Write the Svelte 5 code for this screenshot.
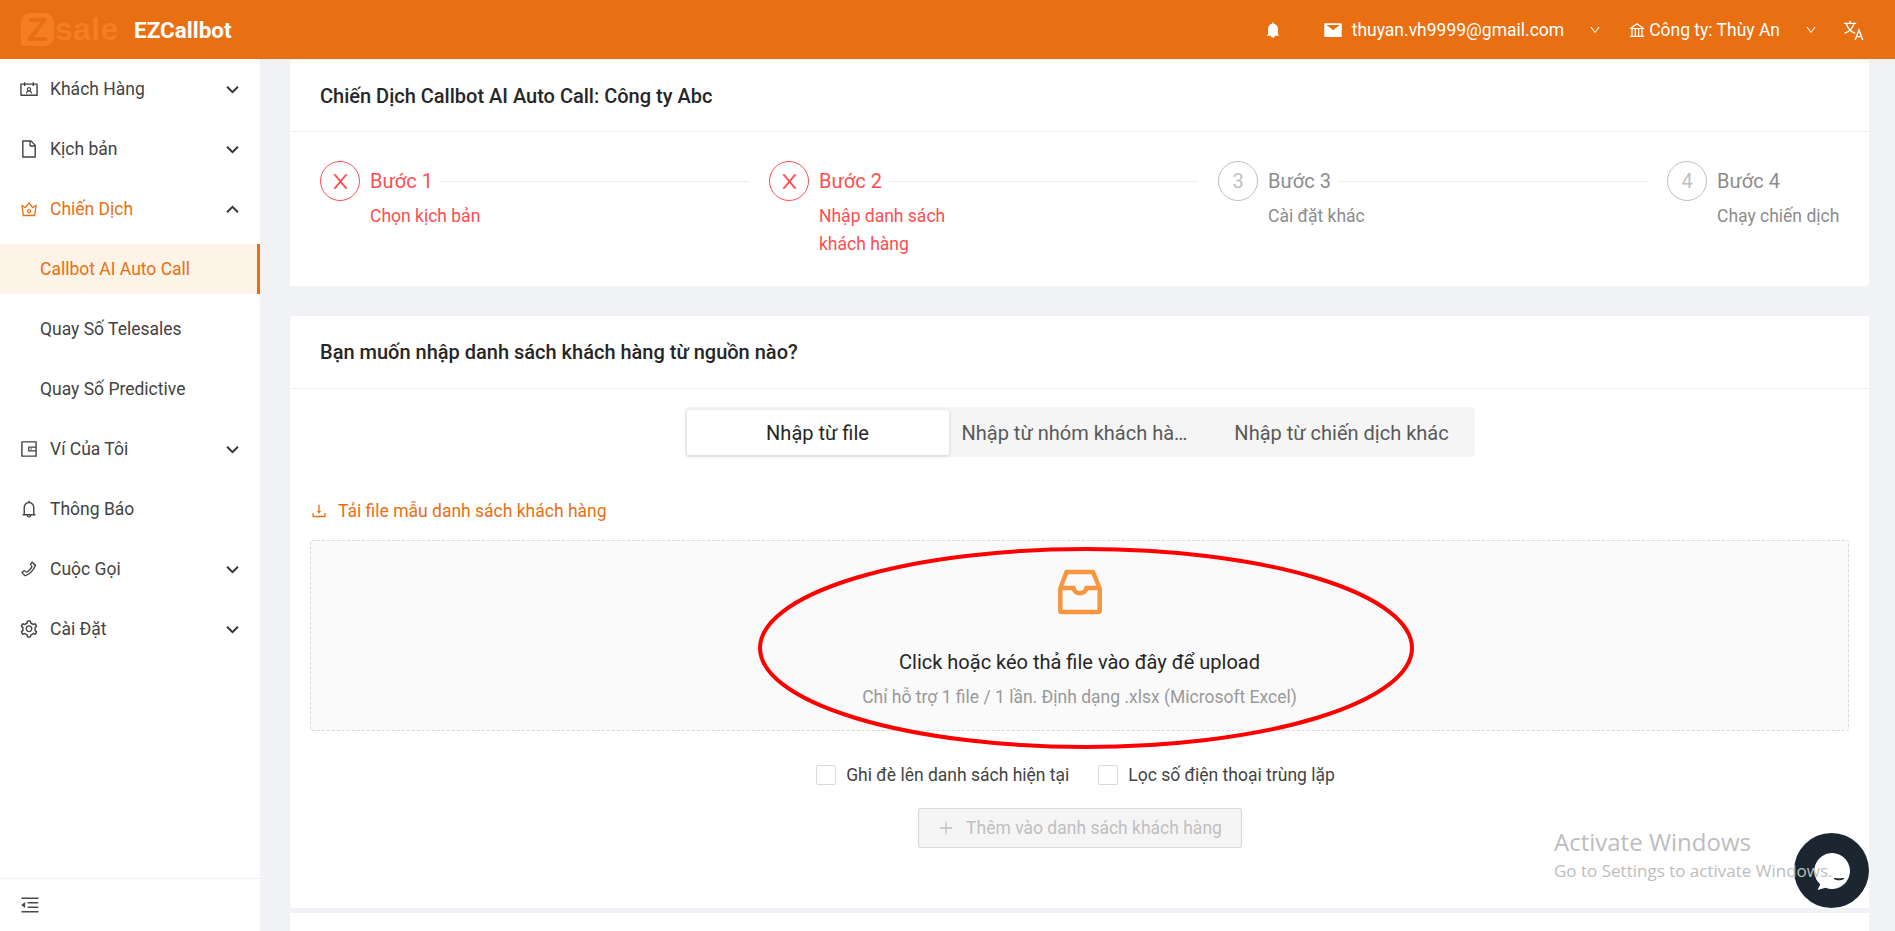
<script>
  const icons = {
    contacts: 'M594.3 601.5a111.8 111.8 0 0029.1-75.5c0-61.9-49.9-112-111.4-112s-111.4 50.1-111.4 112c0 29.1 11 55.5 29.1 75.5a158.09 158.09 0 00-74.6 126.1 8 8 0 008 8.4H407c4.2 0 7.6-3.3 7.9-7.5 3.8-50.6 46-90.5 97.2-90.5s93.4 40 97.2 90.5c.3 4.2 3.7 7.5 7.9 7.5H661a8 8 0 008-8.4c-2.8-53.3-32-99.7-74.7-126.1zM512 578c-28.5 0-51.7-23.3-51.7-52s23.2-52 51.7-52 51.7 23.3 51.7 52-23.2 52-51.7 52zm416-354H768v-56c0-4.4-3.6-8-8-8h-56c-4.4 0-8 3.6-8 8v56H328v-56c0-4.4-3.6-8-8-8h-56c-4.4 0-8 3.6-8 8v56H96c-17.7 0-32 14.3-32 32v576c0 17.7 14.3 32 32 32h832c17.7 0 32-14.3 32-32V256c0-17.7-14.3-32-32-32zm-40 568H136V296h120v56c0 4.4 3.6 8 8 8h56c4.4 0 8-3.6 8-8v-56h368v56c0 4.4 3.6 8 8 8h56c4.4 0 8-3.6 8-8v-56h120v496z',
    file: 'M854.6 288.6L639.4 73.4c-6-6-14.1-9.4-22.6-9.4H192c-17.7 0-32 14.3-32 32v832c0 17.7 14.3 32 32 32h640c17.7 0 32-14.3 32-32V311.3c0-8.5-3.4-16.7-9.4-22.7zM790.2 326H602V137.8L790.2 326zm1.8 562H232V136h302v216a42 42 0 0042 42h216v494z',
    crown: 'M899.6 276.5L705 396.4 518.4 147.5a8.06 8.06 0 00-12.9 0L319 396.4 124.3 276.5c-5.7-3.5-13.1 1.2-12.2 7.9L188.5 865c1.1 7.9 7.9 14 16 14h615.1c8 0 14.9-6 15.9-14l76.4-580.6c.8-6.7-6.5-11.4-12.3-7.9zm-126 534.1H250.3l-53.8-409.4 139.8 86.1L512 252.9l175.7 234.4 139.8-86.1-53.9 409.4zM512 509c-62.1 0-112.6 50.5-112.6 112.6S449.9 734.2 512 734.2s112.6-50.5 112.6-112.6S574.1 509 512 509zm0 160.9c-26.6 0-48.2-21.6-48.2-48.3 0-26.6 21.6-48.3 48.2-48.3s48.2 21.6 48.2 48.3c0 26.6-21.6 48.3-48.2 48.3z',
    wallet: 'M880 112H144c-17.7 0-32 14.3-32 32v736c0 17.7 14.3 32 32 32h736c17.7 0 32-14.3 32-32V144c0-17.7-14.3-32-32-32zm-40 464H528V448h312v128zm0 264H184V184h656v200H496c-17.7 0-32 14.3-32 32v192c0 17.7 14.3 32 32 32h344v200zM580 512a40 40 0 1080 0 40 40 0 10-80 0z',
    bell: 'M816 768h-24V428c0-141.1-104.3-257.7-240-277.1V112c0-22.1-17.9-40-40-40s-40 17.9-40 40v38.9c-135.7 19.4-240 136-240 277.1v340h-24c-17.7 0-32 14.3-32 32v32c0 4.4 3.6 8 8 8h216c0 61.8 50.2 112 112 112s112-50.2 112-112h216c4.4 0 8-3.6 8-8v-32c0-17.7-14.3-32-32-32zM512 888c-26.5 0-48-21.5-48-48h96c0 26.5-21.5 48-48 48zM304 768V428c0-55.6 21.6-107.8 60.9-147.1S456.4 220 512 220c55.6 0 107.8 21.6 147.1 60.9S720 372.4 720 428v340H304z',
    bellFilled: 'M816 768h-24V428c0-141.1-104.3-257.8-240-277.2V112c0-22.1-17.9-40-40-40s-40 17.9-40 40v38.8c-135.7 19.4-240 136.1-240 277.2v340h-24c-17.7 0-32 14.3-32 32v32c0 4.4 3.6 8 8 8h216c0 61.8 50.2 112 112 112s112-50.2 112-112h216c4.4 0 8-3.6 8-8v-32c0-17.7-14.3-32-32-32z',
    setting: 'M924.8 625.7l-65.5-56c3.1-19 4.7-38.4 4.7-57.8s-1.6-38.8-4.7-57.8l65.5-56a32.03 32.03 0 009.3-35.2l-.9-2.6a443.74 443.74 0 00-79.7-137.9l-1.8-2.1a32.12 32.12 0 00-35.1-9.5l-81.3 28.9c-30-24.6-63.5-44-99.7-57.6l-15.7-85a32.05 32.05 0 00-25.8-25.7l-2.7-.5c-52.1-9.4-106.9-9.4-159 0l-2.7.5a32.05 32.05 0 00-25.8 25.7l-15.8 85.4a351.86 351.86 0 00-99 57.4l-81.9-29.1a32 32 0 00-35.1 9.5l-1.8 2.1a446.02 446.02 0 00-79.7 137.9l-.9 2.6c-4.5 12.5-.8 26.5 9.3 35.2l66.3 56.6c-3.1 18.8-4.6 38-4.6 57.1 0 19.2 1.5 38.4 4.6 57.1L99 625.5a32.03 32.03 0 00-9.3 35.2l.9 2.6c18.1 50.4 44.9 96.9 79.7 137.9l1.8 2.1a32.12 32.12 0 0035.1 9.5l81.9-29.1c29.8 24.5 63.1 43.9 99 57.4l15.8 85.4a32.05 32.05 0 0025.8 25.7l2.7.5a449.4 449.4 0 00159 0l2.7-.5a32.05 32.05 0 0025.8-25.7l15.7-85a350 350 0 0099.7-57.6l81.3 28.9a32 32 0 0035.1-9.5l1.8-2.1c34.8-41.1 61.6-87.5 79.7-137.9l.9-2.6c4.5-12.3.8-26.3-9.3-35zM788.3 465.9c2.5 15.1 3.8 30.6 3.8 46.1s-1.3 31-3.8 46.1l-6.6 40.1 74.7 63.9a370.03 370.03 0 01-42.6 73.6L721 702.8l-31.4 25.8c-23.9 19.6-50.5 35-79.3 45.8l-38.1 14.3-17.9 97a377.5 377.5 0 01-85 0l-17.9-97.2-37.8-14.5c-28.5-10.8-55-26.2-78.7-45.7l-31.4-25.9-93.4 33.2c-17-22.9-31.2-47.6-42.6-73.6l75.5-64.5-6.5-40c-2.4-14.9-3.7-30.3-3.7-45.5 0-15.3 1.2-30.6 3.7-45.5l6.5-40-75.5-64.5c11.3-26.1 25.6-50.7 42.6-73.6l93.4 33.2 31.4-25.9c23.7-19.5 50.2-34.9 78.7-45.7l37.9-14.3 17.9-97.2c28.1-3.2 56.8-3.2 85 0l17.9 97 38.1 14.3c28.7 10.8 55.4 26.2 79.3 45.8l31.4 25.8 92.8-32.9c17 22.9 31.2 47.6 42.6 73.6L781.8 426l6.5 39.9zM512 326c-97.2 0-176 78.8-176 176s78.8 176 176 176 176-78.8 176-176-78.8-176-176-176zm79.2 255.2A111.6 111.6 0 01512 614c-29.9 0-58-11.7-79.2-32.8A111.6 111.6 0 01400 502c0-29.9 11.7-58 32.8-79.2C454 401.6 482.1 390 512 390c29.9 0 58 11.6 79.2 32.8A111.6 111.6 0 01624 502c0 29.9-11.7 58-32.8 79.2z',
    phone: 'M690 130l170 150c20 18 24 44 8 72C760 600 590 770 340 880c-28 12-52 6-70-12L130 720c-22-22-20-52 4-70l110-80c20-14 44-12 62 4l70 62c110-60 190-140 250-250l-56-78c-14-20-14-44 2-62l70-100c12-16 32-28 48-16zM690 200l-66 94 78 108c-70 140-170 240-310 310l-96-84-100 72 124 132c220-100 370-250 470-470z',
    fold: 'M408 442h480c4.4 0 8-3.6 8-8v-56c0-4.4-3.6-8-8-8H408c-4.4 0-8 3.6-8 8v56c0 4.4 3.6 8 8 8zm-8 204c0 4.4 3.6 8 8 8h480c4.4 0 8-3.6 8-8v-56c0-4.4-3.6-8-8-8H408c-4.4 0-8 3.6-8 8v56zm504-486H120c-4.4 0-8 3.6-8 8v56c0 4.4 3.6 8 8 8h784c4.4 0 8-3.6 8-8v-56c0-4.4-3.6-8-8-8zm0 632H120c-4.4 0-8 3.6-8 8v56c0 4.4 3.6 8 8 8h784c4.4 0 8-3.6 8-8v-56c0-4.4-3.6-8-8-8zM115.4 518.9L271.7 642c5.8 4.6 14.4.5 14.4-6.9V388.9c0-7.4-8.5-11.5-14.4-6.9L115.4 505.1a8.74 8.74 0 000 13.8z',
    mail: 'M928 160H96c-17.7 0-32 14.3-32 32v640c0 17.7 14.3 32 32 32h832c17.7 0 32-14.3 32-32V192c0-17.7-14.3-32-32-32zm-80.8 108.9L531.7 514.4c-7.8 6.1-18.7 6.1-26.5 0L189.6 268.9A7.2 7.2 0 01194 256h648.8a7.2 7.2 0 014.4 12.9z',
    bank: 'M894 462c30.9 0 43.8-39.7 18.7-58L530.8 126.2a31.81 31.81 0 00-37.6 0L111.3 404c-25.1 18.2-12.2 58 18.8 58H192v374h-72c-4.4 0-8 3.6-8 8v52c0 4.4 3.6 8 8 8h784c4.4 0 8-3.6 8-8v-52c0-4.4-3.6-8-8-8h-72V462h62zM512 196.7l271.1 197.2H240.9L512 196.7zM264 462h117v374H264V462zm189 0h117v374H453V462zm307 374H642V462h118v374z',
    down: 'M884 256h-75c-5.1 0-9.9 2.5-12.9 6.6L512 654.2 227.9 262.6c-3-4.1-7.8-6.6-12.9-6.6h-75c-6.5 0-10.3 7.4-6.5 12.7l352.6 486.1c12.8 17.6 39 17.6 51.7 0l352.6-486.1c3.9-5.3.1-12.7-6.4-12.7z',
    close: 'M563.8 512l262.5-312.9c4.4-5.2.7-13.1-6.1-13.1h-79.8c-4.7 0-9.2 2.1-12.3 5.7L511.6 449.8 295.1 191.7c-3-3.6-7.5-5.7-12.3-5.7H203c-6.8 0-10.5 7.9-6.1 13.1L459.4 512 196.9 824.9A7.95 7.95 0 00203 838h79.8c4.7 0 9.2-2.1 12.3-5.7l216.5-258.1 216.5 258.1c3 3.6 7.5 5.7 12.3 5.7h79.8c6.8 0 10.5-7.9 6.1-13.1L563.8 512z',
    download: 'M505.7 661a8 8 0 0012.6 0l112-141.7c4.1-5.2.4-12.9-6.3-12.9h-74.1V168c0-4.4-3.6-8-8-8h-60c-4.4 0-8 3.6-8 8v338.3H400c-6.7 0-10.4 7.7-6.3 12.9l112 141.8zM878 626h-60c-4.4 0-8 3.6-8 8v154H214V634c0-4.4-3.6-8-8-8h-60c-4.4 0-8 3.6-8 8v198c0 17.7 14.3 32 32 32h684c17.7 0 32-14.3 32-32V634c0-4.4-3.6-8-8-8z',
    inbox: 'M885.2 446.3l-.2-.8-112.2-285.1c-5-16.1-19.9-27.2-36.8-27.2H281.2c-17 0-32.1 11.3-36.9 27.6L139.4 443l-.3.7-.2.8c-1.3 4.9-1.7 9.9-1 14.8-.1 1.6-.2 3.2-.2 4.8V830a60.9 60.9 0 0060.8 60.8h627.2c33.5 0 60.8-27.3 60.9-60.8V464.1c0-1.3 0-2.6-.1-3.7.4-4.9 0-9.6-1.3-14.1zm-295.8-43l-.3 15.7c-.8 44.9-31.8 75.1-77.1 75.1-22.1 0-41.1-7.1-54.8-20.6S436 441.2 435.6 419l-.3-15.7H229.5L309 210h399.2l81.7 193.3H589.4zm-375 76.8h157.3c24.3 57.1 76 90.8 140.4 90.8 33.7 0 65-9.4 90.3-27.2 22.2-15.6 39.5-37.4 50.7-63.6h156.5V814H214.4V480.1z',
    plus: 'M482 152h60q8 0 8 8v314h298q8 0 8 8v60q0 8-8 8H550v314q0 8-8 8h-60q-8 0-8-8V550H176q-8 0-8-8v-60q0-8 8-8h298V160q0-8 8-8z'
  };

  const menu = [
    { label: 'Khách Hàng', icon: 'contacts', caret: 'down' },
    { label: 'Kịch bản', icon: 'file', caret: 'down' },
    { label: 'Chiến Dịch', icon: 'crown', caret: 'up', open: true },
    { label: 'Callbot AI Auto Call', sub: true, selected: true },
    { label: 'Quay Số Telesales', sub: true },
    { label: 'Quay Số Predictive', sub: true },
    { label: 'Ví Của Tôi', icon: 'wallet', caret: 'down' },
    { label: 'Thông Báo', icon: 'bell' },
    { label: 'Cuộc Gọi', icon: 'phone', caret: 'down' },
    { label: 'Cài Đặt', icon: 'setting', caret: 'down' }
  ];

  const steps = [
    { title: 'Bước 1', desc: 'Chọn kịch bản', error: true },
    { title: 'Bước 2', desc: 'Nhập danh sách khách hàng', error: true },
    { title: 'Bước 3', desc: 'Cài đặt khác', num: 3 },
    { title: 'Bước 4', desc: 'Chạy chiến dịch', num: 4 }
  ];

  const tabs = ['Nhập từ file', 'Nhập từ nhóm khách hàng', 'Nhập từ chiến dịch khác'];
</script>

{#snippet icon(name, cls)}
  <svg class={cls} viewBox="0 0 1024 1024" fill="currentColor" aria-hidden="true"><path d={icons[name]} /></svg>
{/snippet}

<div class="app">
  <header class="topbar">
    <div class="logo"><span class="logo-z">Z</span><span class="logo-sale">sale</span></div>
    <div class="brand">EZCallbot</div>
    <div class="top-right">
      {@render icon('bellFilled', 'ic-bell')}
      {@render icon('mail', 'ic-mail')}
      <span class="email">thuyan.vh9999@gmail.com</span>
      {@render icon('down', 'ic-down')}
      {@render icon('bank', 'ic-bank')}
      <span class="company">Công ty: Thùy An</span>
      {@render icon('down', 'ic-down')}
      <svg class="ic-trans" viewBox="0 0 20 20" fill="none" stroke="currentColor" stroke-width="1.3" aria-hidden="true">
        <path d="M1 4h11M6.500 1.500V4M3 4c1 4 4 7.500 8 9M10 4c-1 4-4 7.500-8.500 9" />
        <path d="M11 19l3.500-9 3.500 9M12.200 16h4.600" />
      </svg>
    </div>
  </header>

  <div class="body">
    <aside class="sidebar">
      <nav class="menu">
        {#each menu as item}
          <div class="item" class:sub={item.sub} class:selected={item.selected} class:open={item.open}>
            {#if item.icon}{@render icon(item.icon, 'ic-menu')}{/if}
            <span class="label">{item.label}</span>
            {#if item.caret}
              <svg class="caret" class:up={item.caret === 'up'} viewBox="0 0 12 8" fill="none" stroke="currentColor" stroke-width="1.800" aria-hidden="true"><path d="M1 1.500l5 5 5-5" /></svg>
            {/if}
          </div>
        {/each}
      </nav>
      <div class="collapse">{@render icon('fold', 'ic-fold')}</div>
    </aside>

    <main class="main">
      <section class="card card-steps">
        <div class="card-head">Chiến Dịch Callbot AI Auto Call: Công ty Abc</div>
        <div class="steps">
          {#each steps as step, i}
            <div class="step" class:error={step.error}>
              <div class="step-icon">
                {#if step.error}{@render icon('close', 'ic-close')}{:else}{step.num}{/if}
              </div>
              <div class="step-text">
                <div class="step-title">
                  <span>{step.title}</span>
                  {#if i < steps.length - 1}<i class="step-line"></i>{/if}
                </div>
                <div class="step-desc">{step.desc}</div>
              </div>
            </div>
          {/each}
        </div>
      </section>

      <section class="card card-import">
        <div class="card-head head-tall">Bạn muốn nhập danh sách khách hàng từ nguồn nào?</div>
        <div class="import-body">
          <div class="segmented">
            {#each tabs as tab, i}
              <div class="seg" class:active={i === 0}><span>{tab}</span></div>
            {/each}
          </div>

          <div class="template-link">
            {@render icon('download', 'ic-dl')}
            <span>Tải file mẫu danh sách khách hàng</span>
          </div>

          <div class="dragger">
            {@render icon('inbox', 'ic-inbox')}
            <div class="drag-title">Click hoặc kéo thả file vào đây để upload</div>
            <div class="drag-hint">Chỉ hỗ trợ 1 file / 1 lần. Định dạng .xlsx (Microsoft Excel)</div>
            <svg class="annotation" viewBox="0 0 660 204" fill="none" aria-hidden="true">
              <ellipse cx="330" cy="102" rx="326" ry="99" stroke="#ff0000" stroke-width="4" />
            </svg>
          </div>

          <div class="checks">
            <label class="check"><i class="box"></i>Ghi đè lên danh sách hiện tại</label>
            <label class="check"><i class="box"></i>Lọc số điện thoại trùng lặp</label>
          </div>

          <button class="add-btn" disabled>
            {@render icon('plus', 'ic-plus')}
            <span>Thêm vào danh sách khách hàng</span>
          </button>
        </div>
      </section>

      <section class="card card-next"></section>
    </main>
  </div>

  <div class="chat">
    <svg viewBox="0 0 40 40" aria-hidden="true">
      <path d="M20 2a18 18 0 1 1-6.500 34.800L5.500 39l2.800-5.500A18 18 0 0 1 20 2z" fill="#fff" />
      <path d="M22 27.500c3 1.800 7 1.800 10 0-3 .5-7 .5-10 0z" fill="#1b2630" stroke="#1b2630" stroke-width="1" />
    </svg>
  </div>

  <div class="activate">
    <div class="activate-title">Activate Windows</div>
    <div class="activate-sub">Go to Settings to activate Windows.</div>
  </div>
</div>

<style>
  :global(body) {
    margin: 0;
    font-family: Roboto, "Liberation Sans", sans-serif;
    color: #262626;
  }

  .app {
    position: relative;
    display: flex;
    flex-direction: column;
    height: 931px;
    overflow: hidden;
    background: #f0f2f5;
    font-size: 17.5px;
  }

  /* header */
  .topbar {
    display: flex;
    align-items: center;
    flex: none;
    height: 59px;
    padding: 0 30px 0 21px;
    background: #e96f13;
    color: #fff;
  }

  .logo {
    display: flex;
    align-items: center;
    width: 113px;
    color: #f47e20;
  }

  .logo-z {
    display: flex;
    align-items: center;
    justify-content: center;
    width: 33px;
    height: 33px;
    border-radius: 9px 9px 9px 3px;
    background: #f47e20;
    color: #e96f13;
    font: 700 34px "Liberation Sans", sans-serif;
  }

  .logo-sale {
    font: 700 32px/33px "Liberation Sans", sans-serif;
    margin-left: 1px;
    letter-spacing: 0.3px;
  }

  .brand {
    font-size: 22.5px;
    font-weight: 700;
  }

  .top-right {
    display: flex;
    align-items: center;
    margin-left: auto;
  }

  .ic-bell { width: 18px; height: 20px; }
  .ic-mail { width: 20px; height: 20px; margin-left: 41px; }
  .email { margin-left: 9px; }
  .ic-down { width: 12px; height: 12px; margin-left: 25px; }
  .ic-bank { width: 18px; height: 18px; margin-left: 27px; }
  .company { margin-left: 3px; }
  .ic-trans { width: 22px; height: 22px; margin-left: 26px; }

  .body {
    display: flex;
    flex: 1;
    min-height: 0;
  }

  /* sidebar */
  .sidebar {
    display: flex;
    flex-direction: column;
    flex: none;
    width: 260px;
    background: #fff;
  }

  .menu {
    display: flex;
    flex-direction: column;
    flex: 1;
    gap: 10px;
    padding-top: 5px;
  }

  .item {
    display: flex;
    align-items: center;
    height: 50px;
    padding: 0 21px 0 19px;
    color: #434343;
  }

  .item.open { color: #e96f13; }

  .item.sub { padding-left: 40px; }

  .item.selected {
    background: #fdf3e6;
    color: #e96f13;
    box-shadow: inset -3px 0 0 #e96f13;
  }

  .ic-menu {
    flex: none;
    width: 20px;
    height: 20px;
    margin-right: 11px;
  }

  .label { flex: 1; }

  .caret {
    width: 13px;
    height: 9px;
    color: #333;
  }

  .caret.up { transform: rotate(180deg); }

  .collapse {
    display: flex;
    align-items: center;
    flex: none;
    height: 52px;
    padding-left: 19px;
    border-top: 1px solid #f0f0f0;
    color: #4a4a4a;
  }

  .ic-fold { width: 22px; height: 22px; }

  /* content */
  .main {
    display: flex;
    flex-direction: column;
    flex: 1;
    min-width: 0;
    padding: 1px 26px 0 30px;
  }

  .card {
    background: #fff;
    border-radius: 2px;
  }

  .card-steps { flex: none; height: 226px; }

  .card-import {
    flex: none;
    height: 592px;
    margin-top: 30px;
  }

  .card-next {
    flex: 1;
    margin-top: 5px;
    border-radius: 0;
  }

  .card-head {
    display: flex;
    align-items: center;
    height: 71px;
    padding: 0 30px;
    border-bottom: 1px solid #f0f0f0;
    font-size: 20px;
    font-weight: 500;
    color: #262626;
  }

  .head-tall { height: 72px; }

  .steps {
    display: grid;
    grid-template-columns: repeat(3, 449px) 1fr;
    padding: 29px 30px 0;
  }

  .step {
    display: flex;
    color: #8c8c8c;
  }

  .step.error { color: #ff4d4f; }

  .step-icon {
    display: flex;
    align-items: center;
    justify-content: center;
    flex: none;
    width: 38px;
    height: 38px;
    margin-right: 10px;
    border: 1px solid #bfbfbf;
    border-radius: 50%;
    font-size: 20px;
    color: #bfbfbf;
  }

  .step.error .step-icon {
    border-color: #ff4d4f;
    color: #ff4d4f;
  }

  .ic-close { width: 23px; height: 23px; }

  .step-text { flex: 1; }

  .step-title {
    display: flex;
    align-items: center;
    height: 40px;
    font-size: 20px;
  }

  .step-line {
    flex: 1;
    height: 1px;
    margin: 0 20px 0 7px;
    background: #ececec;
  }

  .step-desc {
    max-width: 140px;
    line-height: 28px;
    margin-top: 1px;
  }

  .step:last-child .step-desc {
    max-width: none;
    white-space: nowrap;
  }

  .import-body {
    display: flex;
    flex-direction: column;
    align-items: center;
    padding: 18px 20px 0;
  }

  .segmented {
    display: grid;
    grid-template-columns: repeat(3, 262px);
    padding: 3px 2px 2px;
    border-radius: 2px;
    background: #f5f5f5;
  }

  .seg {
    display: flex;
    align-items: center;
    justify-content: center;
    height: 45px;
    padding: 0 13px;
    border-radius: 2px;
    font-size: 20px;
    color: #595959;
  }

  .seg:nth-child(2) { padding-right: 20px; }

  .seg span {
    overflow: hidden;
    white-space: nowrap;
    text-overflow: ellipsis;
  }

  .seg.active {
    background: #fff;
    color: #262626;
    box-shadow: 0 1px 4px rgba(0, 0, 0, 0.15);
  }

  .template-link {
    display: flex;
    align-items: center;
    align-self: flex-start;
    margin-top: 42px;
    height: 24px;
    color: #e96f13;
  }

  .ic-dl { width: 18px; height: 18px; margin-right: 10px; }

  .dragger {
    position: relative;
    display: flex;
    flex-direction: column;
    align-items: center;
    box-sizing: border-box;
    align-self: stretch;
    height: 191px;
    margin-top: 17px;
    padding-top: 21px;
    border: 1px dashed #d9d9d9;
    border-radius: 2px;
    background: #fafafa;
  }

  .ic-inbox {
    width: 60px;
    height: 60px;
    color: #f7963f;
  }

  .drag-title {
    margin-top: 26px;
    font-size: 20px;
    line-height: 28px;
    color: #262626;
  }

  .drag-hint {
    margin-top: 7px;
    line-height: 28px;
    color: #999;
  }

  .annotation {
    position: absolute;
    left: 445px;
    top: 5px;
    width: 660px;
    height: 204px;
    pointer-events: none;
  }

  .checks {
    display: flex;
    gap: 29px;
    margin-top: 31px;
    margin-right: 8px;
  }

  .check {
    display: flex;
    align-items: center;
    height: 26px;
    color: #434343;
  }

  .box {
    width: 18px;
    height: 18px;
    margin-right: 10px;
    border: 1px solid #d9d9d9;
    border-radius: 2px;
    background: #fff;
  }

  .add-btn {
    display: flex;
    align-items: center;
    justify-content: center;
    box-sizing: border-box;
    width: 324px;
    height: 40px;
    margin-top: 20px;
    border: 1px solid #d9d9d9;
    border-radius: 2px;
    background: #f5f5f5;
    color: #bfbfbf;
    font: inherit;
  }

  .ic-plus { width: 18px; height: 18px; margin-right: 11px; }

  /* floating */
  .chat {
    position: absolute;
    left: 1794px;
    top: 833px;
    display: flex;
    align-items: center;
    justify-content: center;
    width: 75px;
    height: 75px;
    border-radius: 50%;
    background: #1b2630;
  }

  .chat svg { width: 40px; height: 40px; }

  .activate {
    position: absolute;
    left: 1554px;
    top: 826px;
    color: #bdbdbd;
    font-family: "Open Sans", sans-serif;
    white-space: nowrap;
  }

  .activate-title { font-size: 24px; line-height: 32px; }
  .activate-sub { font-size: 17px; line-height: 26px; }
</style>
